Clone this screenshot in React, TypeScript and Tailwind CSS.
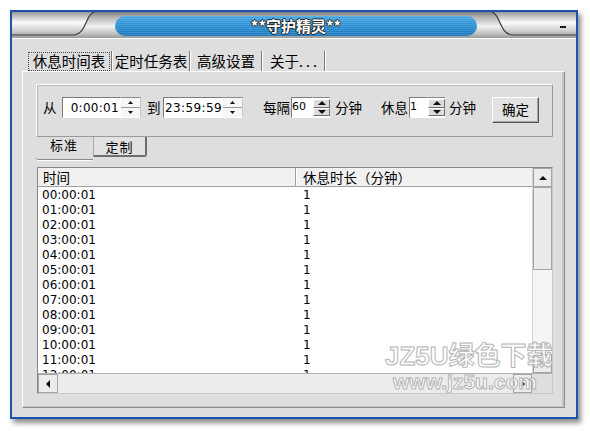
const rows = Array.from({ length: 13 }, (_, i) => `${String(i).padStart(2, "0")}:00:01`);

function Tri({ dir, w = 7, h = 4 }: { dir: "up" | "down" | "left" | "right"; w?: number; h?: number }) {
  const pts =
    dir === "up"
      ? `0,${h} ${w},${h} ${w / 2},0`
      : dir === "down"
      ? `0,0 ${w},0 ${w / 2},${h}`
      : dir === "left"
      ? `${w},0 ${w},${h} 0,${h / 2}`
      : `0,0 0,${h} ${w},${h / 2}`;
  return (
    <svg width={w} height={h} viewBox={`0 0 ${w} ${h}`}>
      <polygon points={pts} fill="#111" />
    </svg>
  );
}

function FlatSpin() {
  return (
    <div className="w-[20px] h-[21px] shrink-0 flex flex-col border-t border-t-[#8a8a8a] border-b border-b-white border-r border-r-[#c8c8c8] bg-[#f6f6f6]">
      <div className="flex-1 flex items-center justify-center border-b border-b-[#9a9a9a]">
        <Tri dir="up" w={5} h={3} />
      </div>
      <div className="flex-1 flex items-center justify-center">
        <Tri dir="down" w={5} h={3} />
      </div>
    </div>
  );
}

function Spin() {
  return (
    <div className="w-[17px] h-[21px] shrink-0 flex flex-col bg-white border-t border-t-[#8a8a8a] border-b border-b-white py-[1px]">
      <div className="h-[9px] flex items-center justify-center bg-[#dcdcdc] border border-t-white border-l-white border-r-[#6e6e6e] border-b-[#6e6e6e]">
        <Tri dir="up" w={8} h={4} />
      </div>
      <div className="h-[9px] flex items-center justify-center bg-[#dcdcdc] border border-t-white border-l-white border-r-[#6e6e6e] border-b-[#6e6e6e]">
        <Tri dir="down" w={8} h={4} />
      </div>
    </div>
  );
}

function TitleArt() {
  return (
    <svg className="absolute inset-0" width="564" height="26" viewBox="0 0 564 26">
      <defs>
        <linearGradient id="silver" x1="0" y1="0" x2="0" y2="1">
          <stop offset="0" stopColor="#7c7c7c" />
          <stop offset="0.2" stopColor="#b4b4b4" />
          <stop offset="0.55" stopColor="#f2f2f2" />
          <stop offset="0.85" stopColor="#bdbdbd" />
          <stop offset="1" stopColor="#9a9a9a" />
        </linearGradient>
        <linearGradient id="silver2" x1="0" y1="0" x2="0" y2="1">
          <stop offset="0" stopColor="#9a9a9a" />
          <stop offset="0.45" stopColor="#fbfbfb" />
          <stop offset="0.8" stopColor="#d2d2d2" />
          <stop offset="1" stopColor="#b0b0b0" />
        </linearGradient>
        <linearGradient id="pill" x1="0" y1="0" x2="0" y2="1">
          <stop offset="0" stopColor="#4aa8e2" />
          <stop offset="0.5" stopColor="#2a8fd2" />
          <stop offset="1" stopColor="#1c78bf" />
        </linearGradient>
        <pattern id="stripes" width="4" height="2" patternUnits="userSpaceOnUse">
          <rect width="4" height="1" fill="#ffffff" opacity="0.12" />
        </pattern>
      </defs>
      <rect width="564" height="26" fill="url(#silver)" />
      <path d="M0 0 H82 C73 3 75 21 62 23 H0 Z" fill="url(#silver2)" />
      <path d="M82 0 C73 3 75 21 62 23 H0" stroke="#3a3a3a" strokeWidth="1.2" fill="none" />
      <path d="M480 0 C489 3 487 21 500 23 H564 V0 Z" fill="url(#silver2)" />
      <path d="M480 0 C489 3 487 21 500 23 H564" stroke="#3a3a3a" strokeWidth="1.2" fill="none" />
      <rect x="103" y="4" width="362" height="20" rx="10" fill="url(#pill)" />
      <rect x="103" y="4" width="362" height="20" rx="10" fill="url(#stripes)" />
      <rect x="548" y="14" width="6" height="2" fill="#1a1a1a" />
    </svg>
  );
}

export default function App() {
  return (
    <div className="w-[590px] h-[431px] bg-white pt-[10px] pl-[10px] font-['Noto_Sans_CJK_SC',sans-serif] text-black">
      <div className="w-[568px] h-[409px] border-2 border-[#1f52ab] bg-[#dedede] flex flex-col shadow-[3px_4px_5px_rgba(0,0,0,0.45)]">
        <div className="relative h-[26px] shrink-0 flex items-center justify-center">
          <TitleArt />
          <span className="relative pl-[4px] text-[15px] font-bold leading-none text-white [text-shadow:1px_0_#222,-1px_0_#222,0_1px_#222,0_-1px_#222]">
            **守护精灵**
          </span>
        </div>
        <div className="h-px bg-white shrink-0" />

        <div className="flex-1 flex flex-col pl-[10px] pr-[11px] pt-[11px] pb-[9px]">
          <div className="h-[21px] flex items-end pl-[6px] text-[14.5px] leading-none">
            <div className="w-[82px] h-[19px] flex items-center justify-center border border-dotted border-[#444]">
              休息时间表
            </div>
            <div className="w-[2px] h-[20px] ml-[1px] border-l border-l-[#7a7a7a] border-r border-r-white" />
            <div className="w-[76px] h-[19px] flex items-center justify-center">定时任务表</div>
            <div className="w-[2px] h-[20px] border-l border-l-[#7a7a7a] border-r border-r-white" />
            <div className="w-[70px] h-[19px] flex items-center justify-center">高级设置</div>
            <div className="w-[2px] h-[20px] border-l border-l-[#7a7a7a] border-r border-r-white" />
            <div className="w-[61px] h-[19px] flex items-center pl-[7px]">
              关于<span className="tracking-[3px]">...</span>
            </div>
            <div className="w-[2px] h-[20px] border-l border-l-[#7a7a7a] border-r border-r-white" />
          </div>

          <div className="flex-1 flex flex-col border border-t-white border-l-white border-r-[#8a8a8a] border-b-[#8a8a8a] shadow-[inset_-2px_-1px_0_#c4c4c4]">
            <div className="ml-[13px] mt-[12px] w-[517px] h-[53px] shrink-0 border border-t-white border-l-white border-r-[#9a9a9a] border-b-[#9a9a9a] shadow-[inset_1px_1px_0_#b8b8b8]">
              <div className="flex items-start pt-[12px] text-[13.5px]">
                <span className="ml-[6px] w-[14px] h-[21px] leading-[21px] shrink-0">从</span>
                <div className="ml-[5px] w-[59px] h-[21px] shrink-0 bg-white border border-t-[#7c7c7c] border-l-[#7c7c7c] border-r-white border-b-white flex items-center justify-end pr-[1px] font-['DejaVu_Sans',sans-serif] text-[12px] tracking-[0.3px] overflow-hidden">
                  0:00:01
                </div>
                <FlatSpin />
                <span className="ml-[6px] w-[14px] h-[21px] leading-[21px] shrink-0">到</span>
                <div className="ml-[2px] w-[60px] h-[21px] shrink-0 bg-white border border-t-[#7c7c7c] border-l-[#7c7c7c] border-r-white border-b-white flex items-center pl-[1px] font-['DejaVu_Sans',sans-serif] text-[12px] tracking-[0.4px] whitespace-nowrap overflow-hidden">
                  23:59:59
                </div>
                <FlatSpin />
                <span className="ml-[20px] w-[28px] h-[21px] leading-[21px] shrink-0">每隔</span>
                <div className="w-[22px] h-[21px] shrink-0 bg-white border border-t-[#7c7c7c] border-l-[#7c7c7c] border-r-white border-b-white flex items-center font-['DejaVu_Sans',sans-serif] text-[11px] overflow-hidden">
                  60
                </div>
                <Spin />
                <span className="ml-[5px] w-[28px] h-[21px] leading-[21px] shrink-0">分钟</span>
                <span className="ml-[18px] w-[28px] h-[21px] leading-[21px] shrink-0">休息</span>
                <div className="w-[19px] h-[21px] shrink-0 bg-white border border-t-[#7c7c7c] border-l-[#7c7c7c] border-r-white border-b-white flex items-center font-['DejaVu_Sans',sans-serif] text-[11px] overflow-hidden">
                  1
                </div>
                <Spin />
                <span className="ml-[4px] w-[28px] h-[21px] leading-[21px] shrink-0">分钟</span>
                <button className="ml-[15px] w-[47px] h-[26px] shrink-0 bg-[#e2e2e2] border border-t-white border-l-white border-r-[#555] border-b-[#555] shadow-[inset_-1px_-1px_0_#a8a8a8] text-[13.5px] leading-none">
                  确定
                </button>
              </div>
            </div>

            <div className="ml-[12px] h-[23px] shrink-0 flex items-start text-[13px] leading-none">
              <div className="w-[58px] h-[23px] flex justify-center border-b border-b-[#8c8c8c] rounded-bl-[4px] shadow-[0_1px_0_#fff]">
                <span className="mt-[1px] tracking-[1px]">标准</span>
              </div>
              <div className="w-[54px] h-[20px] flex items-center justify-center border-l border-l-[#a8a8a8] border-r-2 border-r-[#6e6e6e] border-b-2 border-b-[#6e6e6e] rounded-br-[3px] bg-[#e2e2e2]">
                <span className="tracking-[1px]">定制</span>
              </div>
            </div>

            <div className="relative ml-[14px] mt-[7px] w-[516px] h-[227px] shrink-0 border border-t-[#888] border-l-[#888] border-r-[#c8c8c8] border-b-[#c8c8c8] bg-white flex flex-col overflow-hidden">
              <div className="flex h-[205px]">
                <div className="w-[494px] flex flex-col">
                  <div className="h-[19px] shrink-0 flex bg-[#f1f1f1] border-b border-b-[#a0a0a0] text-[13.5px] leading-[18px]">
                    <div className="w-[258px] pl-[5px] border-r border-r-[#a0a0a0] shadow-[1px_0_0_#fff]">时间</div>
                    <div className="flex-1 pl-[6px] ml-[1px]">休息时长（分钟）</div>
                  </div>
                  <div className="flex-1 overflow-hidden pt-[1px] font-['DejaVu_Sans',sans-serif] text-[12px] leading-[15px]">
                    {rows.map((t) => (
                      <div key={t} className="h-[15px] flex">
                        <div className="w-[258px] pl-[4px]">{t}</div>
                        <div className="pl-[7px]">1</div>
                      </div>
                    ))}
                  </div>
                </div>
                <div className="w-[20px] flex flex-col bg-[#f5f5f5] border-l border-l-[#d0d0d0]">
                  <div className="h-[19px] shrink-0 flex items-center justify-center bg-[#ececec] border border-[#a4a4a4]">
                    <Tri dir="up" w={8} h={4} />
                  </div>
                  <div className="h-[83px] shrink-0 bg-[#ebebeb] border border-[#a4a4a4]" />
                  <div className="flex-1" />
                  <div className="h-[19px] shrink-0 flex items-center justify-center bg-[#ececec] border border-[#a4a4a4]">
                    <Tri dir="down" w={8} h={4} />
                  </div>
                </div>
              </div>
              <div className="flex h-[20px] border-t border-t-[#b0b0b0]">
                <div className="w-[494px] flex bg-[#ececec]">
                  <div className="w-[20px] flex items-center justify-center border border-[#a4a4a4]">
                    <Tri dir="left" w={4} h={8} />
                  </div>
                  <div className="flex-1" />
                  <div className="w-[19px] flex items-center justify-center border border-[#a4a4a4]">
                    <Tri dir="right" w={4} h={8} />
                  </div>
                </div>
                <div className="w-[20px] bg-[#dedede]" />
              </div>

              <div className="absolute left-[347px] top-[175px] text-[26px] font-bold leading-none whitespace-nowrap text-white/80 [-webkit-text-stroke:1px_#b4b4b4] font-['Liberation_Sans','Noto_Sans_CJK_SC',sans-serif]">
                JZ5U绿色下载
              </div>
              <div className="absolute left-[355px] top-[203px] text-[21px] font-bold leading-none whitespace-nowrap text-white/80 [-webkit-text-stroke:1px_#b4b4b4] font-['Liberation_Sans',sans-serif]">
                www.jz5u.com
              </div>
            </div>
          </div>
        </div>
      </div>
    </div>
  );
}
